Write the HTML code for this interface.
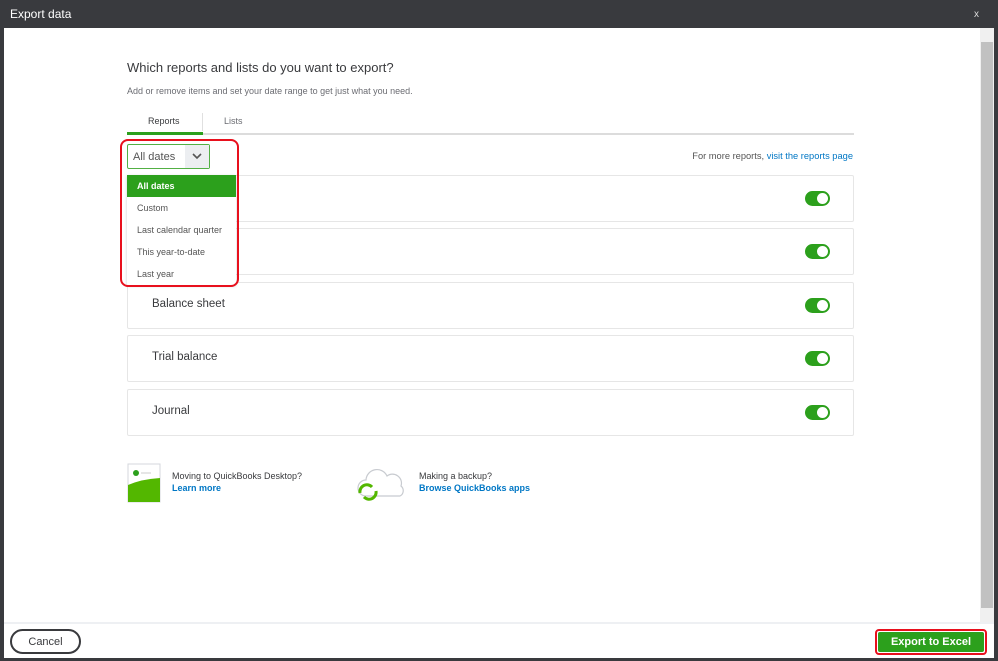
<!DOCTYPE html>
<html><head><style>
*{box-sizing:border-box;margin:0;padding:0}
body{width:998px;height:661px;background:#393a3e;font-family:"Liberation Sans",sans-serif;position:relative;overflow:hidden}
.title{position:absolute;left:10px;top:7px;color:#fff;font-size:12px}
.x{position:absolute;right:19px;top:9px;color:#ddd;font-size:10px}
.main{position:absolute;left:4px;top:28px;width:976px;height:594px;background:#fff}
.sb{position:absolute;left:980px;top:28px;width:14px;height:594px;background:#f0f0f0}
.sb .th{position:absolute;left:1px;top:14px;width:12px;height:566px;background:#c1c1c1}
.foot{position:absolute;left:4px;top:622px;width:990px;height:36px;background:#fff;border-top:2px solid #eef0f3}
.abs{position:absolute}
.row{position:absolute;left:127px;width:727px;height:47px;border:1px solid #e6e6e6;border-radius:2px}
.row span{position:absolute;left:24px;top:15px;font-size:11.5px;color:#393a3d}
.tog{position:absolute;left:677px;top:15px;width:25px;height:15px;border-radius:8px;background:#2ca01c}
.tog:after{content:"";position:absolute;right:2px;top:2px;width:11px;height:11px;border-radius:50%;background:#fff}
.dd div{height:22px;line-height:22px;padding-left:10px;font-size:9px;color:#555}
</style></head><body>
<div class="title">Export data</div><div class="x">x</div>
<div class="main"></div>
<div class="sb"><div class="th"></div></div>
<div class="abs" style="left:127px;top:60px;font-size:13px;color:#393a3d">Which reports and lists do you want to export?</div>
<div class="abs" style="left:127px;top:86px;font-size:9px;color:#6b6c72">Add or remove items and set your date range to get just what you need.</div>
<div class="abs" style="left:127px;top:133px;width:727px;height:2px;background:#dcdcdc"></div>
<div class="abs" style="left:127px;top:132px;width:76px;height:3px;background:#2ca01c"></div>
<div class="abs" style="left:202px;top:113px;width:1px;height:18px;background:#e0e0e0"></div>
<div class="abs" style="left:148px;top:116px;font-size:9px;color:#393a3d">Reports</div>
<div class="abs" style="left:224px;top:116px;font-size:9px;color:#6b6c72">Lists</div>
<div class="abs" style="right:145px;top:151px;font-size:9.3px;color:#555;white-space:nowrap">For more reports, <span style="color:#0077c5">visit the reports page</span></div>
<div class="row" style="top:175px"><div class="tog"></div></div>
<div class="row" style="top:228px"><div class="tog"></div></div>
<div class="row" style="top:282px"><span>Balance sheet</span><div class="tog"></div></div>
<div class="row" style="top:335px"><span>Trial balance</span><div class="tog"></div></div>
<div class="row" style="top:389px"><span>Journal</span><div class="tog"></div></div>
<div class="abs" style="left:127px;top:144px;width:83px;height:25px;border:1px solid #52b044;border-radius:2px;background:#fff">
 <div class="abs" style="left:5px;top:6px;font-size:11px;color:#555">All dates</div>
 <div class="abs" style="right:0;top:0;width:24px;height:23px;background:#eceef1"><svg width="24" height="23"><path d="M8 9l4 4 4-4" stroke="#555" stroke-width="1.6" fill="none"/></svg></div>
</div>
<div class="abs dd" style="left:127px;top:175px;width:109px;height:110px;background:#fff;box-shadow:0 1px 3px rgba(0,0,0,.2)">
 <div style="background:#2ca01c;color:#fff;font-weight:bold">All dates</div><div>Custom</div><div>Last calendar quarter</div><div>This year-to-date</div><div>Last year</div>
</div>
<div class="abs" style="left:120px;top:139px;width:119px;height:148px;border:2.5px solid #e8101d;border-radius:8px"></div>
<svg class="abs" style="left:127px;top:463px" width="34" height="40"><rect x="1" y="1" width="32" height="38" fill="#fff" stroke="#d4d7dc"/><circle cx="9" cy="10" r="3" fill="#2ca01c"/><path d="M14 10h10" stroke="#ccc"/><path d="M1 22 Q15 16 33 15 V39 H1Z" fill="#53b700"/></svg>
<div class="abs" style="left:172px;top:471px;font-size:9px;color:#393a3d">Moving to QuickBooks Desktop?</div>
<div class="abs" style="left:172px;top:483px;font-size:9px;color:#0077c5;font-weight:bold">Learn more</div>
<svg class="abs" style="left:354px;top:463px" width="54" height="40"><path d="M12 33a8 8 0 0 1 0-16a11 11 0 0 1 21-4a9 9 0 0 1 14 10a6 6 0 0 1 -1 10z" fill="none" stroke="#c8cbd0" stroke-width="1.2"/><path d="M6 30a7 7 0 0 1 12-6M22 28a7 7 0 0 1 -12 6" stroke="#53b700" stroke-width="3" fill="none"/></svg>
<div class="abs" style="left:419px;top:471px;font-size:9px;color:#393a3d">Making a backup?</div>
<div class="abs" style="left:419px;top:483px;font-size:9px;color:#0077c5;font-weight:bold">Browse QuickBooks apps</div>
<div class="foot"></div>
<div class="abs" style="left:10px;top:629px;width:71px;height:25px;border:2px solid #393a3d;border-radius:13px;background:#fff;font-size:11px;display:flex;align-items:center;justify-content:center;color:#393a3d">Cancel</div>
<div class="abs" style="left:875px;top:629px;width:112px;height:26px;border:2.5px solid #e8101d;border-radius:4px;padding:1px"><div style="background:#2ca01c;height:100%;border-radius:2px;color:#fff;font-size:11px;font-weight:bold;display:flex;align-items:center;justify-content:center">Export to Excel</div></div>
</body></html>
